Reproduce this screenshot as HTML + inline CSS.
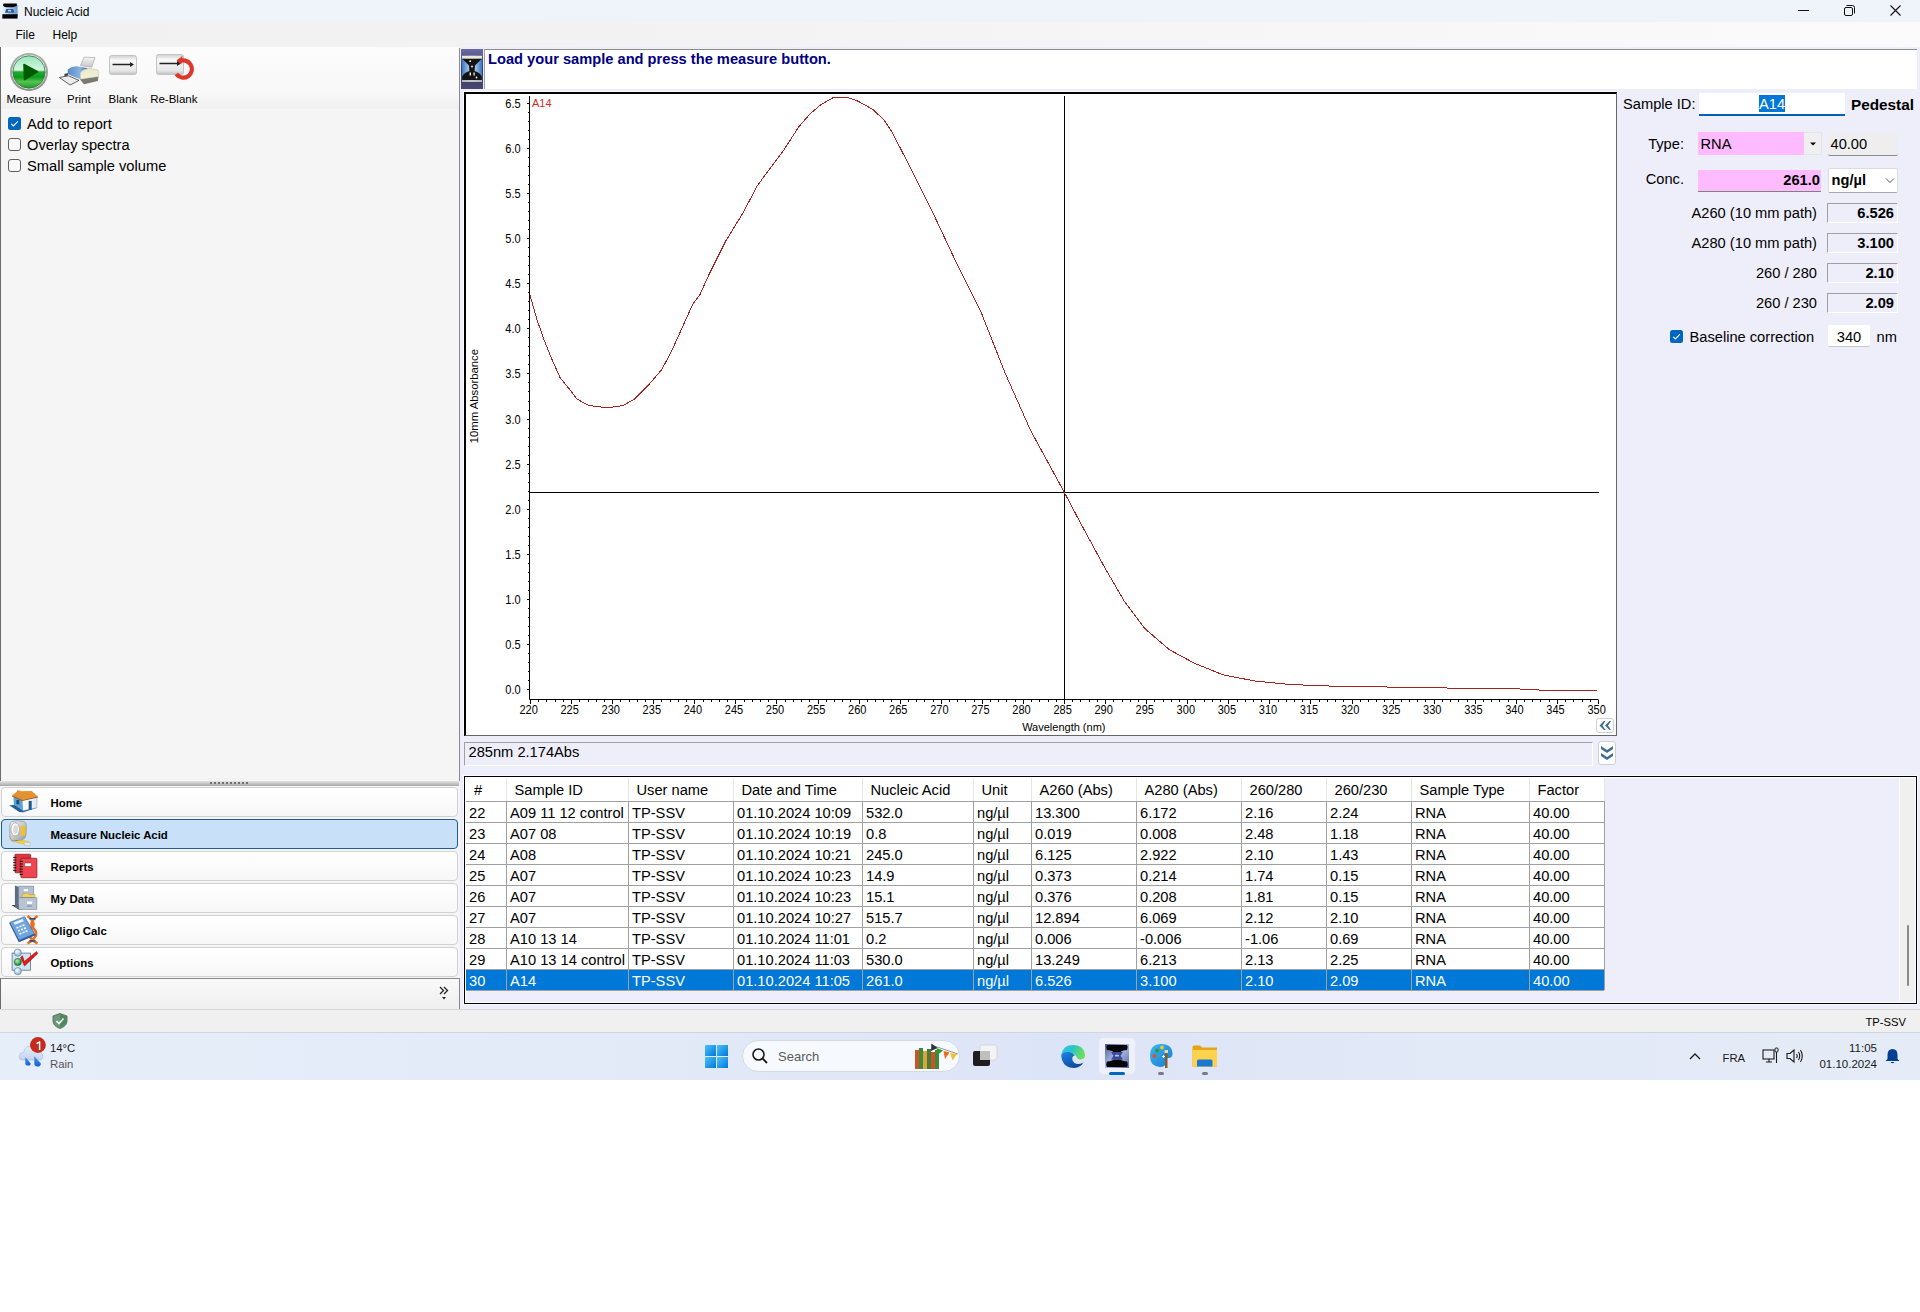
<!DOCTYPE html>
<html><head><meta charset="utf-8"><title>Nucleic Acid</title>
<style>
html,body{margin:0;padding:0;}
body{position:relative;width:1920px;height:1312px;overflow:hidden;background:#fff;font-family:"Liberation Sans", sans-serif;}
.t{position:absolute;line-height:1;white-space:nowrap;}
svg text{font-family:"Liberation Sans", sans-serif;}
</style></head><body>
<div style="position:absolute;left:0px;top:0px;width:1920px;height:22px;background:linear-gradient(#EFF3FA 0%,#EFF3FA 85%,#F0F2F6 100%);"></div>
<svg style="position:absolute;left:2px;top:3px" width="16" height="16" viewBox="0 0 16 16">
<defs><linearGradient id="gai" x1="0" y1="0" x2="1" y2="0"><stop offset="0" stop-color="#e8f2fc"/><stop offset="0.5" stop-color="#a8c8ec"/><stop offset="1" stop-color="#6a9ad0"/></linearGradient></defs>
<rect x="0.6" y="2" width="15" height="11" fill="url(#gai)"/>
<path d="M1.6 0.4 L14.8 0.4 L14.8 3 Q12 4 11 4.2 L4 4.2 Q2.5 4 0.9 2.5 Z" fill="#050505"/>
<path d="M0.3 11.2 L15.6 11.2 L15.6 15.6 L0.3 15.6 Z" fill="#050505"/>
<path d="M4.2 6 L11.2 6 L12.4 9.8 L3 9.8 Z" fill="#2a5a9a"/>
<ellipse cx="7.6" cy="7.7" rx="1.8" ry="0.9" fill="#c0dcf8"/>
</svg>
<div class="t" style="left:24px;top:6.29px;font-size:12px;color:#000;">Nucleic Acid</div>
<div style="position:absolute;left:1798px;top:10px;width:11px;height:1px;background:#111;"></div>
<svg style="position:absolute;left:1843px;top:4px" width="13" height="13" viewBox="0 0 13 13">
<rect x="1.5" y="3.5" width="8" height="8" rx="1.5" fill="none" stroke="#111" stroke-width="1"/>
<path d="M3.5 1.5 H9.5 a2 2 0 0 1 2 2 V9.5" fill="none" stroke="#111" stroke-width="1"/>
</svg>
<svg style="position:absolute;left:1889px;top:4px" width="13" height="13" viewBox="0 0 13 13">
<path d="M1.5 1.5 L11.5 11.5 M11.5 1.5 L1.5 11.5" stroke="#111" stroke-width="1.1"/>
</svg>
<div style="position:absolute;left:0px;top:22px;width:1920px;height:25px;background:linear-gradient(to right,#F1F1F1,#F3F3F3 40%,#FBFBFB);"></div>
<div class="t" style="left:15.5px;top:29.29px;font-size:12px;color:#000;">File</div>
<div class="t" style="left:52.5px;top:29.29px;font-size:12px;color:#000;">Help</div>
<div style="position:absolute;left:0px;top:47px;width:460px;height:962px;background:#F5F5F5;"></div>
<div style="position:absolute;left:0px;top:47px;width:459px;height:62px;background:linear-gradient(#FCFCFC 0%,#F8F8F8 75%,#EFEFEF 100%);"></div>
<div style="position:absolute;left:0px;top:47px;width:1px;height:734px;background:#6b6b6b;"></div>
<div style="position:absolute;left:459px;top:48px;width:1px;height:733px;background:#8a8a8a;"></div>
<svg style="position:absolute;left:8px;top:51px" width="42" height="42" viewBox="0 0 42 42">
<defs>
<radialGradient id="gring" cx="50%" cy="40%" r="60%"><stop offset="0" stop-color="#e8e8e8"/><stop offset="1" stop-color="#8c8c8c"/></radialGradient>
<linearGradient id="ggreen" x1="0" y1="0" x2="0" y2="1"><stop offset="0" stop-color="#98e6b8"/><stop offset="0.44" stop-color="#d4f6e2"/><stop offset="0.5" stop-color="#22a832"/><stop offset="0.66" stop-color="#0c9a1c"/><stop offset="0.8" stop-color="#58c450"/><stop offset="1" stop-color="#1e9a2a"/></linearGradient>
</defs>
<circle cx="21" cy="21" r="19" fill="url(#gring)"/>
<circle cx="21" cy="21" r="17" fill="#f4f8f4"/>
<circle cx="21" cy="21" r="16.2" fill="url(#ggreen)" stroke="#2a7a3a" stroke-width="0.8"/>
<path d="M16 13.5 L29.5 20.8 L16.5 28.5 Z" fill="#005a00" stroke="#005a00" stroke-width="1.6" stroke-linejoin="round"/>
</svg>
<svg style="position:absolute;left:58px;top:56px" width="44" height="32" viewBox="0 0 44 32">
<defs><linearGradient id="gpap" x1="0" y1="0" x2="0" y2="1"><stop offset="0" stop-color="#f4f4f4"/><stop offset="1" stop-color="#c8c8c8"/></linearGradient>
<linearGradient id="gblue" x1="0" y1="0" x2="1" y2="0"><stop offset="0" stop-color="#5a88c0"/><stop offset="0.6" stop-color="#8ab4e4"/><stop offset="1" stop-color="#3a5a88"/></linearGradient>
<linearGradient id="gcream" x1="0" y1="0" x2="0" y2="1"><stop offset="0" stop-color="#e8e8c8"/><stop offset="1" stop-color="#f2f2dc"/></linearGradient></defs>
<path d="M26 1.2 L37 1.5 L33.8 11.1 L22.5 9.6 Z" fill="url(#gpap)" stroke="#9a9a9a" stroke-width="0.6"/>
<path d="M6.3 18 L10 17 L10 19.5 L6.5 20.5 Z" fill="#444"/>
<path d="M21.6 23 L40.5 20.3 L39.9 25 L26 28.2 Z" fill="#7a7a70"/>
<path d="M9.7 13.4 Q14 10 18.7 10.2 L30.6 12.2 Q24 14 22.5 16.9 L22.5 23.2 Q16 21 9.7 18 Z" fill="url(#gblue)"/>
<path d="M30.6 12.2 L39.9 14 Q41 16 40.5 20.6 L22.5 23.2 L22.5 16.9 Q24 14 30.6 12.2 Z" fill="url(#gcream)" stroke="#b8b89a" stroke-width="0.5"/>
<path d="M1.3 21.5 L10.6 19.8 L21 24.4 L12.1 29 Z" fill="#ececec" stroke="#505050" stroke-width="0.9"/>
</svg>
<svg style="position:absolute;left:108px;top:54px" width="30" height="23" viewBox="0 0 30 23">
<defs><linearGradient id="gblank" x1="0" y1="0" x2="0" y2="1"><stop offset="0" stop-color="#cfcfcf"/><stop offset="0.25" stop-color="#f9f9f9"/><stop offset="0.8" stop-color="#e6e6e6"/><stop offset="1" stop-color="#bdbdbd"/></linearGradient></defs>
<rect x="1.5" y="1.5" width="27" height="19" rx="2" fill="url(#gblank)" stroke="#c4c4c4" stroke-width="1"/>
<path d="M4.5 10.5 H23" stroke="#222" stroke-width="1.5"/>
<path d="M22 8 L26 10.5 L22 13 Z" fill="#222"/>
</svg>
<svg style="position:absolute;left:155px;top:53px" width="42" height="30" viewBox="0 0 42 30">
<defs><linearGradient id="gblank2" x1="0" y1="0" x2="0" y2="1"><stop offset="0" stop-color="#cfcfcf"/><stop offset="0.25" stop-color="#f9f9f9"/><stop offset="0.8" stop-color="#e6e6e6"/><stop offset="1" stop-color="#bdbdbd"/></linearGradient></defs>
<rect x="1.5" y="1.5" width="27" height="20" rx="2" fill="url(#gblank2)" stroke="#c4c4c4" stroke-width="1"/>
<path d="M4.5 10.5 H23" stroke="#222" stroke-width="1.5"/>
<path d="M22 8 L26 10.5 L22 13 Z" fill="#222"/>
<path d="M23.7 8.8 A8.6 8.6 0 1 1 21.3 21" fill="none" stroke="#e0352b" stroke-width="4.2"/>
<path d="M21.6 7.6 L27.6 2.8 L26.4 11.6 Z" fill="#e0352b"/>
</svg>
<div class="t" style="left:-371.2px;width:800px;text-align:center;top:93.71px;font-size:11.5px;color:#000;">Measure</div>
<div class="t" style="left:-321.2px;width:800px;text-align:center;top:93.71px;font-size:11.5px;color:#000;">Print</div>
<div class="t" style="left:-277px;width:800px;text-align:center;top:93.71px;font-size:11.5px;color:#000;">Blank</div>
<div class="t" style="left:-226.2px;width:800px;text-align:center;top:93.71px;font-size:11.5px;color:#000;">Re-Blank</div>
<svg style="position:absolute;left:8px;top:117px" width="13" height="13" viewBox="0 0 13 13">
<rect x="0" y="0" width="13" height="13" rx="2.5" fill="#0067C0"/>
<path d="M3.2 6.8 L5.4 9 L9.8 4.4" fill="none" stroke="#fff" stroke-width="1.1"/></svg>
<svg style="position:absolute;left:8px;top:138px" width="13" height="13" viewBox="0 0 13 13">
<rect x="0.5" y="0.5" width="12" height="12" rx="2.5" fill="#F8F8F8" stroke="#5e5e5e" stroke-width="1"/></svg>
<svg style="position:absolute;left:8px;top:159px" width="13" height="13" viewBox="0 0 13 13">
<rect x="0.5" y="0.5" width="12" height="12" rx="2.5" fill="#F8F8F8" stroke="#5e5e5e" stroke-width="1"/></svg>
<div class="t" style="left:27px;top:117.03px;font-size:14.67px;color:#000;">Add to report</div>
<div class="t" style="left:27px;top:138.03px;font-size:14.67px;color:#000;">Overlay spectra</div>
<div class="t" style="left:27px;top:159.03px;font-size:14.67px;color:#000;">Small sample volume</div>
<div style="position:absolute;left:0px;top:781px;width:459px;height:5px;background:linear-gradient(#e4e4e4,#a8a8a8);"></div>
<div style="position:absolute;left:210px;top:782px;width:40px;height:2px;background:repeating-linear-gradient(to right,#707070 0 2px,transparent 2px 4px);"></div>
<div style="position:absolute;left:1px;top:787px;width:457px;height:30px;box-sizing:border-box;border:1px solid #d2d2d2;border-radius:4px;background:linear-gradient(#ffffff,#f7f7f7);"></div>
<div class="t" style="left:50.5px;top:797.80px;font-size:11.4px;font-weight:bold;color:#000;">Home</div>
<div style="position:absolute;left:1px;top:819px;width:457px;height:30px;box-sizing:border-box;border:1px solid #1f5b97;border-radius:4px;background:#C9E1F8;"></div>
<div class="t" style="left:50.5px;top:829.80px;font-size:11.4px;font-weight:bold;color:#000;">Measure Nucleic Acid</div>
<div style="position:absolute;left:1px;top:851px;width:457px;height:30px;box-sizing:border-box;border:1px solid #d2d2d2;border-radius:4px;background:linear-gradient(#ffffff,#f7f7f7);"></div>
<div class="t" style="left:50.5px;top:861.80px;font-size:11.4px;font-weight:bold;color:#000;">Reports</div>
<div style="position:absolute;left:1px;top:883px;width:457px;height:30px;box-sizing:border-box;border:1px solid #d2d2d2;border-radius:4px;background:linear-gradient(#ffffff,#f7f7f7);"></div>
<div class="t" style="left:50.5px;top:893.80px;font-size:11.4px;font-weight:bold;color:#000;">My Data</div>
<div style="position:absolute;left:1px;top:915px;width:457px;height:30px;box-sizing:border-box;border:1px solid #d2d2d2;border-radius:4px;background:linear-gradient(#ffffff,#f7f7f7);"></div>
<div class="t" style="left:50.5px;top:925.80px;font-size:11.4px;font-weight:bold;color:#000;">Oligo Calc</div>
<div style="position:absolute;left:1px;top:947px;width:457px;height:30px;box-sizing:border-box;border:1px solid #d2d2d2;border-radius:4px;background:linear-gradient(#ffffff,#f7f7f7);"></div>
<div class="t" style="left:50.5px;top:957.80px;font-size:11.4px;font-weight:bold;color:#000;">Options</div>
<svg style="position:absolute;left:0px;top:785px" width="50" height="195" viewBox="0 785 50 195">
<defs>
<linearGradient id="gwall" x1="0" y1="0" x2="1" y2="0"><stop offset="0" stop-color="#ffffff"/><stop offset="1" stop-color="#dfe9f2"/></linearGradient>
<linearGradient id="gcase" x1="0" y1="0" x2="1" y2="1"><stop offset="0" stop-color="#f8f8f8"/><stop offset="1" stop-color="#9a9a9a"/></linearGradient>
<radialGradient id="gball" cx="40%" cy="35%" r="60%"><stop offset="0" stop-color="#ffffff"/><stop offset="1" stop-color="#8fb8d8"/></radialGradient>
<radialGradient id="gballg" cx="40%" cy="35%" r="60%"><stop offset="0" stop-color="#b8f0b8"/><stop offset="1" stop-color="#1a8a2a"/></radialGradient>
</defs>
<!-- house -->
<path d="M9.2 805.3 L19.3 812 L23.3 812.3 L36.9 807.8 L22 804.8 Z" fill="#1f5f8f"/>
<path d="M13.4 796.4 L17.3 793.7 L22.3 799.4 L22.8 810.8 L13.9 804.8 Z" fill="#5aa3d6"/>
<rect x="16.4" y="799.9" width="2.9" height="4.4" fill="#1d4e7a"/>
<path d="M22.3 799.4 L36.9 796.9 L36.9 807.8 L22.8 810.8 Z" fill="url(#gwall)" stroke="#6a9cc6" stroke-width="0.5"/>
<rect x="28.7" y="800.9" width="3" height="8.9" fill="#1d5a8a"/>
<rect x="17.1" y="790.5" width="3.2" height="2.5" fill="#c87a28"/>
<path d="M12.1 795.4 L17.3 791.2 L31.7 791 L37.9 796.4 L22.3 799.9 Z" fill="#e3922f"/>
<path d="M12.1 795.4 L22.3 799.9 L37.9 796.4 L37.9 797.5 L22.3 801 L12.1 796.5 Z" fill="#9a5a18"/>
<!-- tape measure -->
<path d="M11.8 837.5 L29.7 842 L29.2 845.5 L11 841 Z" fill="#f0d040" stroke="#c8a830" stroke-width="0.4"/>
<path d="M24.2 842 L29.9 842.6 L30.2 846 L24.5 845.5 Z" fill="#e8e8e8" stroke="#b0b0b0" stroke-width="0.5"/>
<path d="M9.6 836 Q10 841 15 841 L18 840.5 L17 837 Z" fill="#111"/>
<path d="M12 821.5 Q17 820.5 23 821.2 Q26.5 822 26.3 826 L26 835 Q25.5 839 21.5 840 L13 841 Q9.6 840 9.7 835 L9.7 826 Q10 822 12 821.5 Z" fill="url(#gcase)" stroke="#8a8a8a" stroke-width="0.6"/>
<ellipse cx="15.2" cy="829.4" rx="4.3" ry="6.6" fill="#fafafa" stroke="#a0a0a0" stroke-width="0.8"/>
<ellipse cx="15.6" cy="829.6" rx="2.4" ry="4.4" fill="#d8d8d8"/>
<rect x="20.8" y="826" width="4.6" height="9.5" fill="#f0c030"/>
<!-- reports -->
<rect x="14.9" y="854.2" width="15.8" height="18.6" rx="1" fill="#e23440" stroke="#7a1a20" stroke-width="0.7"/>
<rect x="20.8" y="858.2" width="16.1" height="19.5" rx="1" fill="#f04450" stroke="#7a1a20" stroke-width="0.7"/>
<rect x="24.5" y="862.9" width="7" height="3.5" rx="0.8" fill="#fff" stroke="#9a2028" stroke-width="0.5"/>
<path d="M13.1 857.4 h3.3 M13.1 860 h3.3 M13.1 862.6 h3.3 M13.1 865.2 h3.3 M13.1 867.8 h3.3 M13.1 870.4 h3.3 M19.6 861.4 h3.3 M19.6 864 h3.3 M19.6 866.6 h3.3 M19.6 869.2 h3.3 M19.6 871.8 h3.3 M19.6 874.4 h3.3" stroke="#1a1a1a" stroke-width="1"/>
<!-- my data -->
<path d="M11.4 905 L18.8 909.5 L22 909.5 L18 905 Z" fill="#333"/>
<path d="M14.9 885.5 L18.8 886.7 L18.8 909.5 L14.9 907 Z" fill="#5c6c84"/>
<path d="M14.9 885.5 L33 885.2 L34 886.7 L18.8 886.7 Z" fill="#d8e0ea"/>
<rect x="18.8" y="886.7" width="15" height="11" fill="#b4c0d0" stroke="#6a788c" stroke-width="0.5"/>
<rect x="23.8" y="889.2" width="4.2" height="2" fill="#fff"/>
<path d="M21.8 897.5 L23 893.5 L28 893.1 L29 894.5 L35.2 894.8 L35 897.6 Z" fill="#f4d35a" stroke="#a08a20" stroke-width="0.4"/>
<rect x="18.8" y="897.8" width="18.1" height="11.7" fill="#b8c4d4" stroke="#6a788c" stroke-width="0.5"/>
<rect x="27" y="901.5" width="5.2" height="2.4" fill="#fff"/>
<rect x="27" y="905.5" width="5.2" height="1" fill="#7a8898"/>
<!-- oligo calc -->
<path d="M27.5 916 C33 920 36 924 31 929 C26 934 30 939 37.5 943.5" fill="none" stroke="#ea7024" stroke-width="2.6"/>
<path d="M37.5 916 C32 920 29 924 34 929 C39 934 35 939 27.5 943.5" fill="none" stroke="#ea7024" stroke-width="2.6"/>
<path d="M29.5 918.8 h6 M29.5 941 h6" stroke="#1d4e8a" stroke-width="1.4"/>
<path d="M9.2 923.1 L24.8 917 L35.7 935.3 L18.8 942.2 Z" fill="#2c5a9a"/>
<path d="M9.8 922.3 L24.5 916.6 L34.5 933.8 L19 940.2 Z" fill="#6fa4dc" stroke="#3a6aa8" stroke-width="0.5"/>
<path d="M13.5 922.5 L22.5 919 L23.8 921.2 L14.8 924.8 Z" fill="#eef5fc"/>
<path d="M16.5 928 l2 -0.8 M19.5 926.8 l2 -0.8 M22.5 925.6 l2 -0.8 M18 931 l2 -0.8 M21 929.8 l2 -0.8 M24 928.6 l2 -0.8 M19.5 934 l2 -0.8 M22.5 932.8 l2 -0.8 M25.5 931.6 l2 -0.8" stroke="#f4f8fc" stroke-width="1.7"/>
<!-- options -->
<rect x="12.1" y="953.1" width="18.4" height="17.1" fill="#cfe3f3" stroke="#5c7088" stroke-width="0.8"/>
<circle cx="17.8" cy="952.6" r="3.6" fill="url(#gball)" stroke="#5c7c98" stroke-width="0.6"/>
<circle cx="17.8" cy="962" r="3.6" fill="url(#gballg)" stroke="#1a5a2a" stroke-width="0.6"/>
<circle cx="17.8" cy="971.2" r="3.6" fill="url(#gball)" stroke="#5c7c98" stroke-width="0.6"/>
<path d="M20.5 957.5 L22.5 955.8 L24.3 961.5 L36.5 951.5 L37.8 953.5 L24.5 966 Z" fill="#e81818" stroke="#8a0a0a" stroke-width="0.5"/>
</svg>
<div style="position:absolute;left:0px;top:978px;width:460px;height:32px;box-sizing:border-box;border-top:1px solid #8a8a8a;border-left:1px solid #6b6b6b;border-right:1px solid #8a8a8a;border-bottom:1px solid #7a7a7a;background:linear-gradient(#f9f9f9,#efefef);"></div>
<svg style="position:absolute;left:438px;top:985px" width="12" height="16" viewBox="0 0 12 16">
<path d="M2 2 L5.5 5.5 L2 9 M6 2 L9.5 5.5 L6 9" fill="none" stroke="#222" stroke-width="1.3"/>
<path d="M4 12 L8 12 L6 14.5 Z" fill="#222"/>
</svg>
<div style="position:absolute;left:460px;top:47px;width:1460px;height:962px;background:#EEEEFA;"></div>
<svg style="position:absolute;left:461px;top:49px" width="22" height="40" viewBox="0 0 22 40">
<defs><linearGradient id="gmsg" x1="0" y1="0" x2="1" y2="0"><stop offset="0" stop-color="#3a78c0"/><stop offset="0.5" stop-color="#d2e8fb"/><stop offset="1" stop-color="#3a78c0"/></linearGradient>
<linearGradient id="gfr" x1="0" y1="0" x2="0" y2="1"><stop offset="0" stop-color="#6c6aa6"/><stop offset="0.5" stop-color="#3a3858"/><stop offset="1" stop-color="#4a4872"/></linearGradient></defs>
<rect x="0" y="0" width="22" height="40" fill="url(#gfr)"/>
<rect x="1" y="6.8" width="20" height="26" fill="url(#gmsg)"/>
<rect x="1" y="6.8" width="20" height="2.9" fill="#ece8d8"/>
<path d="M1.2 9.7 L20.8 9.7 L14 16.6 L13.6 22 Q19 23.5 20.8 27.5 L20.8 31.2 L1.2 31.2 L1.2 27.5 Q3 23.5 8.4 22 L8 16.6 Z" fill="#141414"/>
<rect x="1" y="31.2" width="20" height="1.6" fill="#c8c8cc"/>
<circle cx="9.2" cy="12.2" r="0.9" fill="#fff"/><circle cx="11" cy="17.5" r="1" fill="#e8e8e8"/>
<rect x="8.6" y="23.5" width="1.4" height="3" fill="#f0f0f0"/><rect x="12.4" y="23.5" width="1.4" height="3" fill="#e0e0e0"/>
<circle cx="15.5" cy="28.5" r="0.9" fill="#fff"/>
</svg>
<div style="position:absolute;left:484px;top:49px;width:1433px;height:40px;box-sizing:border-box;border-top:1px solid #8c8c8c;border-left:1px solid #a0a0a0;background:#fff;"></div>
<div class="t" style="left:488px;top:52.03px;font-size:14.67px;font-weight:bold;color:#000080;">Load your sample and press the measure button.</div>
<div style="position:absolute;left:464px;top:92px;width:1153px;height:644px;box-sizing:border-box;border-top:2px solid #000;border-left:2px solid #000;border-right:1px solid #666;border-bottom:1px solid #666;background:#fff;box-shadow:-1px -1px 0 #fcfcff;"></div>
<svg style="position:absolute;left:0;top:0" width="1920" height="1312" viewBox="0 0 1920 1312">
<path d="M529.5 96 V699.5 H1598.5" fill="none" stroke="#000" stroke-width="1"/>
<path d="M527 689.5 H529 M528 680.5 H529 M528 671.5 H529 M528 662.5 H529 M528 653.5 H529 M527 644.5 H529 M528 635.5 H529 M528 626.5 H529 M528 617.5 H529 M528 608.5 H529 M527 599.5 H529 M528 590.5 H529 M528 581.5 H529 M528 572.5 H529 M528 563.5 H529 M527 554.5 H529 M528 545.5 H529 M528 536.5 H529 M528 527.5 H529 M528 518.5 H529 M527 509.5 H529 M528 500.5 H529 M528 491.5 H529 M528 482.5 H529 M528 473.5 H529 M527 464.5 H529 M528 455.5 H529 M528 446.5 H529 M528 437.5 H529 M528 428.5 H529 M527 419.5 H529 M528 410.5 H529 M528 401.5 H529 M528 391.5 H529 M528 382.5 H529 M527 373.5 H529 M528 364.5 H529 M528 355.5 H529 M528 346.5 H529 M528 337.5 H529 M527 328.5 H529 M528 319.5 H529 M528 310.5 H529 M528 301.5 H529 M528 292.5 H529 M527 283.5 H529 M528 274.5 H529 M528 265.5 H529 M528 256.5 H529 M528 247.5 H529 M527 238.5 H529 M528 229.5 H529 M528 220.5 H529 M528 211.5 H529 M528 202.5 H529 M527 193.5 H529 M528 184.5 H529 M528 175.5 H529 M528 166.5 H529 M528 157.5 H529 M527 148.5 H529 M528 139.5 H529 M528 130.5 H529 M528 121.5 H529 M528 112.5 H529 M527 103.5 H529 M530.5 700 V704 M538.5 700 V702 M546.5 700 V702 M555.5 700 V702 M563.5 700 V702 M571.5 700 V704 M579.5 700 V702 M588.5 700 V702 M596.5 700 V702 M604.5 700 V702 M612.5 700 V704 M620.5 700 V702 M629.5 700 V702 M637.5 700 V702 M645.5 700 V702 M653.5 700 V704 M661.5 700 V702 M670.5 700 V702 M678.5 700 V702 M686.5 700 V702 M694.5 700 V704 M703.5 700 V702 M711.5 700 V702 M719.5 700 V702 M727.5 700 V702 M735.5 700 V704 M744.5 700 V702 M752.5 700 V702 M760.5 700 V702 M768.5 700 V702 M776.5 700 V704 M785.5 700 V702 M793.5 700 V702 M801.5 700 V702 M809.5 700 V702 M818.5 700 V704 M826.5 700 V702 M834.5 700 V702 M842.5 700 V702 M850.5 700 V702 M859.5 700 V704 M867.5 700 V702 M875.5 700 V702 M883.5 700 V702 M891.5 700 V702 M900.5 700 V704 M908.5 700 V702 M916.5 700 V702 M924.5 700 V702 M933.5 700 V702 M941.5 700 V704 M949.5 700 V702 M957.5 700 V702 M965.5 700 V702 M974.5 700 V702 M982.5 700 V704 M990.5 700 V702 M998.5 700 V702 M1006.5 700 V702 M1015.5 700 V702 M1023.5 700 V704 M1031.5 700 V702 M1039.5 700 V702 M1048.5 700 V702 M1056.5 700 V702 M1064.5 700 V704 M1072.5 700 V702 M1080.5 700 V702 M1089.5 700 V702 M1097.5 700 V702 M1105.5 700 V704 M1113.5 700 V702 M1122.5 700 V702 M1130.5 700 V702 M1138.5 700 V702 M1146.5 700 V704 M1154.5 700 V702 M1163.5 700 V702 M1171.5 700 V702 M1179.5 700 V702 M1187.5 700 V704 M1195.5 700 V702 M1204.5 700 V702 M1212.5 700 V702 M1220.5 700 V702 M1228.5 700 V704 M1237.5 700 V702 M1245.5 700 V702 M1253.5 700 V702 M1261.5 700 V702 M1269.5 700 V704 M1278.5 700 V702 M1286.5 700 V702 M1294.5 700 V702 M1302.5 700 V702 M1310.5 700 V704 M1319.5 700 V702 M1327.5 700 V702 M1335.5 700 V702 M1343.5 700 V702 M1352.5 700 V704 M1360.5 700 V702 M1368.5 700 V702 M1376.5 700 V702 M1384.5 700 V702 M1393.5 700 V704 M1401.5 700 V702 M1409.5 700 V702 M1417.5 700 V702 M1425.5 700 V702 M1434.5 700 V704 M1442.5 700 V702 M1450.5 700 V702 M1458.5 700 V702 M1467.5 700 V702 M1475.5 700 V704 M1483.5 700 V702 M1491.5 700 V702 M1499.5 700 V702 M1508.5 700 V702 M1516.5 700 V704 M1524.5 700 V702 M1532.5 700 V702 M1540.5 700 V702 M1549.5 700 V702 M1557.5 700 V704 M1565.5 700 V702 M1573.5 700 V702 M1582.5 700 V702 M1590.5 700 V702 M1598.5 700 V704" stroke="#000" stroke-width="1"/>
<path d="M1064.5 96 V700 M529 492.5 H1599" stroke="#000" stroke-width="1"/>
<path d="M530.0 295.0 L537.2 320.3 L544.0 339.8 L550.9 356.9 L560.0 377.5 L569.2 388.9 L577.2 399.2 L588.6 405.5 L602.3 407.2 L611.5 407.2 L623.0 405.5 L634.4 399.2 L648.1 385.5 L661.8 369.5 L671.0 352.3 L682.4 327.2 L692.7 304.3 L700.0 294.5 L709.2 274.0 L725.2 242.0 L742.8 213.2 L757.2 186.0 L765.2 174.8 L782.8 151.6 L798.8 126.8 L810.0 114.0 L821.2 104.4 L834.0 97.2 L846.8 97.2 L858.0 101.2 L872.5 109.2 L883.7 119.6 L891.7 131.6 L900.0 147.6 L912.4 171.6 L931.6 210.0 L957.2 264.4 L981.2 312.5 L1005.2 373.3 L1030.8 430.9 L1064.5 492.7 L1081.2 524.3 L1104.3 566.8 L1123.8 600.4 L1145.0 628.7 L1169.8 650.0 L1194.6 663.3 L1222.9 674.8 L1254.8 681.0 L1290.2 684.5 L1336.3 686.3 L1400.0 687.2 L1429.0 687.8 L1516.0 688.8 L1542.0 690.2 L1597.0 690.4" fill="none" stroke="#A82222" stroke-width="1" shape-rendering="crispEdges"/>
<g transform="scale(0.92 1)">
<text x="565.87" y="693.8" text-anchor="end" font-size="12" fill="#000">0.0</text>
<text x="565.87" y="648.8" text-anchor="end" font-size="12" fill="#000">0.5</text>
<text x="565.87" y="603.8" text-anchor="end" font-size="12" fill="#000">1.0</text>
<text x="565.87" y="558.8" text-anchor="end" font-size="12" fill="#000">1.5</text>
<text x="565.87" y="513.8" text-anchor="end" font-size="12" fill="#000">2.0</text>
<text x="565.87" y="468.8" text-anchor="end" font-size="12" fill="#000">2.5</text>
<text x="565.87" y="423.8" text-anchor="end" font-size="12" fill="#000">3.0</text>
<text x="565.87" y="377.8" text-anchor="end" font-size="12" fill="#000">3.5</text>
<text x="565.87" y="332.8" text-anchor="end" font-size="12" fill="#000">4.0</text>
<text x="565.87" y="287.8" text-anchor="end" font-size="12" fill="#000">4.5</text>
<text x="565.87" y="242.8" text-anchor="end" font-size="12" fill="#000">5.0</text>
<text x="565.87" y="197.8" text-anchor="end" font-size="12" fill="#000">5.5</text>
<text x="565.87" y="152.8" text-anchor="end" font-size="12" fill="#000">6.0</text>
<text x="565.87" y="107.8" text-anchor="end" font-size="12" fill="#000">6.5</text>
<text x="574.57" y="714" text-anchor="middle" font-size="12" fill="#000">220</text>
<text x="619.21" y="714" text-anchor="middle" font-size="12" fill="#000">225</text>
<text x="663.86" y="714" text-anchor="middle" font-size="12" fill="#000">230</text>
<text x="708.51" y="714" text-anchor="middle" font-size="12" fill="#000">235</text>
<text x="753.16" y="714" text-anchor="middle" font-size="12" fill="#000">240</text>
<text x="797.81" y="714" text-anchor="middle" font-size="12" fill="#000">245</text>
<text x="842.46" y="714" text-anchor="middle" font-size="12" fill="#000">250</text>
<text x="887.11" y="714" text-anchor="middle" font-size="12" fill="#000">255</text>
<text x="931.76" y="714" text-anchor="middle" font-size="12" fill="#000">260</text>
<text x="976.40" y="714" text-anchor="middle" font-size="12" fill="#000">265</text>
<text x="1021.05" y="714" text-anchor="middle" font-size="12" fill="#000">270</text>
<text x="1065.70" y="714" text-anchor="middle" font-size="12" fill="#000">275</text>
<text x="1110.35" y="714" text-anchor="middle" font-size="12" fill="#000">280</text>
<text x="1155.00" y="714" text-anchor="middle" font-size="12" fill="#000">285</text>
<text x="1199.65" y="714" text-anchor="middle" font-size="12" fill="#000">290</text>
<text x="1244.30" y="714" text-anchor="middle" font-size="12" fill="#000">295</text>
<text x="1288.95" y="714" text-anchor="middle" font-size="12" fill="#000">300</text>
<text x="1333.60" y="714" text-anchor="middle" font-size="12" fill="#000">305</text>
<text x="1378.24" y="714" text-anchor="middle" font-size="12" fill="#000">310</text>
<text x="1422.89" y="714" text-anchor="middle" font-size="12" fill="#000">315</text>
<text x="1467.54" y="714" text-anchor="middle" font-size="12" fill="#000">320</text>
<text x="1512.19" y="714" text-anchor="middle" font-size="12" fill="#000">325</text>
<text x="1556.84" y="714" text-anchor="middle" font-size="12" fill="#000">330</text>
<text x="1601.49" y="714" text-anchor="middle" font-size="12" fill="#000">335</text>
<text x="1646.14" y="714" text-anchor="middle" font-size="12" fill="#000">340</text>
<text x="1690.79" y="714" text-anchor="middle" font-size="12" fill="#000">345</text>
<text x="1735.43" y="714" text-anchor="middle" font-size="12" fill="#000">350</text>
</g>
<text x="1063.8" y="730.6" text-anchor="middle" font-size="11" fill="#000">Wavelength (nm)</text>
<text transform="translate(478.3 396.1) rotate(-90)" text-anchor="middle" font-size="11.3" fill="#000">10mm Absorbance</text>
<text x="532" y="106.5" font-size="11" fill="#D42A2A">A14</text>
</svg>
<div style="position:absolute;left:1596px;top:718px;width:18px;height:15px;box-sizing:border-box;border:1px solid #d0d0d0;border-radius:3px;background:#fff;"></div>
<svg style="position:absolute;left:1596px;top:718px" width="18" height="15" viewBox="0 0 18 15">
<path d="M8 3 L3.5 7.5 L8 12 L9.5 12 L6.5 7.5 L9.5 3 Z M13.5 3 L9 7.5 L13.5 12 L15 12 L12 7.5 L15 3 Z" fill="#3d6e8e"/>
</svg>
<div style="position:absolute;left:464px;top:742px;width:1129px;height:24px;box-sizing:border-box;border-top:1px solid #a0a0a0;border-left:1px solid #a0a0a0;border-bottom:1px solid #fff;border-right:1px solid #fff;"></div>
<div class="t" style="left:468.5px;top:745.03px;font-size:14.67px;color:#000;">285nm 2.174Abs</div>
<div style="position:absolute;left:1598px;top:741px;width:18px;height:24px;box-sizing:border-box;border:1px solid #d0d0d0;border-radius:3px;background:#fff;"></div>
<svg style="position:absolute;left:1598px;top:741px" width="18" height="24" viewBox="0 0 18 24">
<path d="M3 5 L9 9 L15 5 L15 8 L9 12 L3 8 Z M3 12 L9 16 L15 12 L15 15 L9 19 L3 15 Z" fill="#3d6e8e"/>
</svg>
<div class="t" style="left:1623px;top:97.03px;font-size:14.67px;color:#000;">Sample ID:</div>
<div style="position:absolute;left:1699px;top:93px;width:146px;height:23px;box-sizing:border-box;background:#fff;border-bottom:2px solid #005FB8;"></div>
<div style="position:absolute;left:1759px;top:95px;width:25.5px;height:17px;background:#0078D7;"></div>
<div class="t" style="left:1759px;top:97.03px;font-size:14.67px;color:#fff;">A14</div>
<div class="t" style="left:1851px;top:96.50px;font-size:15.3px;font-weight:bold;color:#000;">Pedestal</div>
<div class="t" style="right:236px;top:137.03px;font-size:14.67px;color:#000;">Type:</div>
<div style="position:absolute;left:1698px;top:132px;width:124px;height:23px;box-sizing:border-box;border:1px solid #e4e4e4;background:#F0F0F0;"></div>
<div style="position:absolute;left:1698px;top:132px;width:106px;height:23px;background:#FFBBFF;"></div>
<svg style="position:absolute;left:1809px;top:141px" width="8" height="6" viewBox="0 0 8 6"><path d="M1 1.5 H7 L4 4.5 Z" fill="#000"/></svg>
<div class="t" style="left:1700.5px;top:137.03px;font-size:14.67px;color:#000;">RNA</div>
<div style="position:absolute;left:1828px;top:133px;width:70px;height:23px;box-sizing:border-box;background:#EEEEEE;border-bottom:1px solid #8c8c8c;border-radius:2px;"></div>
<div class="t" style="left:1830.5px;top:137.03px;font-size:14.67px;color:#000;">40.00</div>
<div class="t" style="right:236px;top:172.03px;font-size:14.67px;color:#000;">Conc.</div>
<div style="position:absolute;left:1698px;top:170px;width:123px;height:22px;box-sizing:border-box;background:#FFBBFF;border-bottom:1px solid #808080;"></div>
<div class="t" style="right:100px;top:173.03px;font-size:14.67px;font-weight:bold;color:#000;">261.0</div>
<div style="position:absolute;left:1828px;top:168px;width:70px;height:25px;box-sizing:border-box;background:#fff;border:1px solid #dcdcdc;border-bottom:1px solid #a8a8a8;border-radius:2px;"></div>
<div class="t" style="left:1831.5px;top:173.03px;font-size:14.67px;font-weight:bold;color:#000;">ng/µl</div>
<svg style="position:absolute;left:1885px;top:177px" width="10" height="7" viewBox="0 0 10 7"><path d="M1 1.5 L5 5.5 L9 1.5" fill="none" stroke="#555" stroke-width="1"/></svg>
<div class="t" style="right:103px;top:206.03px;font-size:14.67px;color:#000;">A260 (10 mm path)</div>
<div style="position:absolute;left:1827px;top:203px;width:71px;height:20px;box-sizing:border-box;border-top:1px solid #a0a0a0;border-left:1px solid #a0a0a0;border-bottom:1px solid #fff;border-right:1px solid #fff;"></div>
<div class="t" style="right:26px;top:206.03px;font-size:14.67px;font-weight:bold;color:#000;">6.526</div>
<div class="t" style="right:103px;top:236.03px;font-size:14.67px;color:#000;">A280 (10 mm path)</div>
<div style="position:absolute;left:1827px;top:233px;width:71px;height:20px;box-sizing:border-box;border-top:1px solid #a0a0a0;border-left:1px solid #a0a0a0;border-bottom:1px solid #fff;border-right:1px solid #fff;"></div>
<div class="t" style="right:26px;top:236.03px;font-size:14.67px;font-weight:bold;color:#000;">3.100</div>
<div class="t" style="right:103px;top:266.03px;font-size:14.67px;color:#000;">260 / 280</div>
<div style="position:absolute;left:1827px;top:263px;width:71px;height:20px;box-sizing:border-box;border-top:1px solid #a0a0a0;border-left:1px solid #a0a0a0;border-bottom:1px solid #fff;border-right:1px solid #fff;"></div>
<div class="t" style="right:26px;top:266.03px;font-size:14.67px;font-weight:bold;color:#000;">2.10</div>
<div class="t" style="right:103px;top:296.03px;font-size:14.67px;color:#000;">260 / 230</div>
<div style="position:absolute;left:1827px;top:293px;width:71px;height:20px;box-sizing:border-box;border-top:1px solid #a0a0a0;border-left:1px solid #a0a0a0;border-bottom:1px solid #fff;border-right:1px solid #fff;"></div>
<div class="t" style="right:26px;top:296.03px;font-size:14.67px;font-weight:bold;color:#000;">2.09</div>
<svg style="position:absolute;left:1670px;top:330px" width="13" height="13" viewBox="0 0 13 13">
<rect x="0" y="0" width="13" height="13" rx="2.5" fill="#0067C0"/>
<path d="M3.2 6.8 L5.4 9 L9.8 4.4" fill="none" stroke="#fff" stroke-width="1.1"/></svg>
<div class="t" style="left:1689.5px;top:330.03px;font-size:14.67px;color:#000;">Baseline correction</div>
<div style="position:absolute;left:1828px;top:325px;width:42px;height:22px;box-sizing:border-box;background:#fff;border-bottom:1px solid #c8c8c8;border-radius:2px;"></div>
<div class="t" style="left:1449px;width:800px;text-align:center;top:330.03px;font-size:14.67px;color:#000;">340</div>
<div class="t" style="left:1876.5px;top:330.03px;font-size:14.67px;color:#000;">nm</div>
<div style="position:absolute;left:464px;top:776px;width:1453px;height:228px;box-sizing:border-box;border:1px solid #000;box-shadow:inset 0 0 0 1px #fff,0 0 0 1px #fafaff;"></div>
<div style="position:absolute;left:466px;top:778px;width:1138px;height:23px;background:#FFFFFF;"></div>
<div class="t" style="left:474px;top:783.03px;font-size:14.67px;color:#000;">#</div>
<div class="t" style="left:514.5px;top:783.03px;font-size:14.67px;color:#000;">Sample ID</div>
<div style="position:absolute;left:506px;top:778px;width:1px;height:23px;background:#E5E5E5;"></div>
<div class="t" style="left:636.5px;top:783.03px;font-size:14.67px;color:#000;">User name</div>
<div style="position:absolute;left:628px;top:778px;width:1px;height:23px;background:#E5E5E5;"></div>
<div class="t" style="left:741.5px;top:783.03px;font-size:14.67px;color:#000;">Date and Time</div>
<div style="position:absolute;left:733px;top:778px;width:1px;height:23px;background:#E5E5E5;"></div>
<div class="t" style="left:870.5px;top:783.03px;font-size:14.67px;color:#000;">Nucleic Acid</div>
<div style="position:absolute;left:862px;top:778px;width:1px;height:23px;background:#E5E5E5;"></div>
<div class="t" style="left:981.5px;top:783.03px;font-size:14.67px;color:#000;">Unit</div>
<div style="position:absolute;left:973px;top:778px;width:1px;height:23px;background:#E5E5E5;"></div>
<div class="t" style="left:1039.5px;top:783.03px;font-size:14.67px;color:#000;">A260 (Abs)</div>
<div style="position:absolute;left:1031px;top:778px;width:1px;height:23px;background:#E5E5E5;"></div>
<div class="t" style="left:1144.5px;top:783.03px;font-size:14.67px;color:#000;">A280 (Abs)</div>
<div style="position:absolute;left:1136px;top:778px;width:1px;height:23px;background:#E5E5E5;"></div>
<div class="t" style="left:1249.5px;top:783.03px;font-size:14.67px;color:#000;">260/280</div>
<div style="position:absolute;left:1241px;top:778px;width:1px;height:23px;background:#E5E5E5;"></div>
<div class="t" style="left:1334.5px;top:783.03px;font-size:14.67px;color:#000;">260/230</div>
<div style="position:absolute;left:1326px;top:778px;width:1px;height:23px;background:#E5E5E5;"></div>
<div class="t" style="left:1419.5px;top:783.03px;font-size:14.67px;color:#000;">Sample Type</div>
<div style="position:absolute;left:1411px;top:778px;width:1px;height:23px;background:#E5E5E5;"></div>
<div class="t" style="left:1537.5px;top:783.03px;font-size:14.67px;color:#000;">Factor</div>
<div style="position:absolute;left:1529px;top:778px;width:1px;height:23px;background:#E5E5E5;"></div>
<div style="position:absolute;left:466px;top:801px;width:1138px;height:21px;background:#fff;"></div>
<div class="t" style="left:469px;top:806.03px;font-size:14.67px;color:#000;">22</div>
<div class="t" style="left:510px;top:806.03px;font-size:14.67px;color:#000;">A09 11 12 control</div>
<div class="t" style="left:632px;top:806.03px;font-size:14.67px;color:#000;">TP-SSV</div>
<div class="t" style="left:737px;top:806.03px;font-size:14.67px;color:#000;">01.10.2024 10:09</div>
<div class="t" style="left:866px;top:806.03px;font-size:14.67px;color:#000;">532.0</div>
<div class="t" style="left:977px;top:806.03px;font-size:14.67px;color:#000;">ng/µl</div>
<div class="t" style="left:1035px;top:806.03px;font-size:14.67px;color:#000;">13.300</div>
<div class="t" style="left:1140px;top:806.03px;font-size:14.67px;color:#000;">6.172</div>
<div class="t" style="left:1245px;top:806.03px;font-size:14.67px;color:#000;">2.16</div>
<div class="t" style="left:1330px;top:806.03px;font-size:14.67px;color:#000;">2.24</div>
<div class="t" style="left:1415px;top:806.03px;font-size:14.67px;color:#000;">RNA</div>
<div class="t" style="left:1533px;top:806.03px;font-size:14.67px;color:#000;">40.00</div>
<div style="position:absolute;left:466px;top:822px;width:1138px;height:21px;background:#fff;"></div>
<div class="t" style="left:469px;top:827.03px;font-size:14.67px;color:#000;">23</div>
<div class="t" style="left:510px;top:827.03px;font-size:14.67px;color:#000;">A07 08</div>
<div class="t" style="left:632px;top:827.03px;font-size:14.67px;color:#000;">TP-SSV</div>
<div class="t" style="left:737px;top:827.03px;font-size:14.67px;color:#000;">01.10.2024 10:19</div>
<div class="t" style="left:866px;top:827.03px;font-size:14.67px;color:#000;">0.8</div>
<div class="t" style="left:977px;top:827.03px;font-size:14.67px;color:#000;">ng/µl</div>
<div class="t" style="left:1035px;top:827.03px;font-size:14.67px;color:#000;">0.019</div>
<div class="t" style="left:1140px;top:827.03px;font-size:14.67px;color:#000;">0.008</div>
<div class="t" style="left:1245px;top:827.03px;font-size:14.67px;color:#000;">2.48</div>
<div class="t" style="left:1330px;top:827.03px;font-size:14.67px;color:#000;">1.18</div>
<div class="t" style="left:1415px;top:827.03px;font-size:14.67px;color:#000;">RNA</div>
<div class="t" style="left:1533px;top:827.03px;font-size:14.67px;color:#000;">40.00</div>
<div style="position:absolute;left:466px;top:843px;width:1138px;height:21px;background:#fff;"></div>
<div class="t" style="left:469px;top:848.03px;font-size:14.67px;color:#000;">24</div>
<div class="t" style="left:510px;top:848.03px;font-size:14.67px;color:#000;">A08</div>
<div class="t" style="left:632px;top:848.03px;font-size:14.67px;color:#000;">TP-SSV</div>
<div class="t" style="left:737px;top:848.03px;font-size:14.67px;color:#000;">01.10.2024 10:21</div>
<div class="t" style="left:866px;top:848.03px;font-size:14.67px;color:#000;">245.0</div>
<div class="t" style="left:977px;top:848.03px;font-size:14.67px;color:#000;">ng/µl</div>
<div class="t" style="left:1035px;top:848.03px;font-size:14.67px;color:#000;">6.125</div>
<div class="t" style="left:1140px;top:848.03px;font-size:14.67px;color:#000;">2.922</div>
<div class="t" style="left:1245px;top:848.03px;font-size:14.67px;color:#000;">2.10</div>
<div class="t" style="left:1330px;top:848.03px;font-size:14.67px;color:#000;">1.43</div>
<div class="t" style="left:1415px;top:848.03px;font-size:14.67px;color:#000;">RNA</div>
<div class="t" style="left:1533px;top:848.03px;font-size:14.67px;color:#000;">40.00</div>
<div style="position:absolute;left:466px;top:864px;width:1138px;height:21px;background:#fff;"></div>
<div class="t" style="left:469px;top:869.03px;font-size:14.67px;color:#000;">25</div>
<div class="t" style="left:510px;top:869.03px;font-size:14.67px;color:#000;">A07</div>
<div class="t" style="left:632px;top:869.03px;font-size:14.67px;color:#000;">TP-SSV</div>
<div class="t" style="left:737px;top:869.03px;font-size:14.67px;color:#000;">01.10.2024 10:23</div>
<div class="t" style="left:866px;top:869.03px;font-size:14.67px;color:#000;">14.9</div>
<div class="t" style="left:977px;top:869.03px;font-size:14.67px;color:#000;">ng/µl</div>
<div class="t" style="left:1035px;top:869.03px;font-size:14.67px;color:#000;">0.373</div>
<div class="t" style="left:1140px;top:869.03px;font-size:14.67px;color:#000;">0.214</div>
<div class="t" style="left:1245px;top:869.03px;font-size:14.67px;color:#000;">1.74</div>
<div class="t" style="left:1330px;top:869.03px;font-size:14.67px;color:#000;">0.15</div>
<div class="t" style="left:1415px;top:869.03px;font-size:14.67px;color:#000;">RNA</div>
<div class="t" style="left:1533px;top:869.03px;font-size:14.67px;color:#000;">40.00</div>
<div style="position:absolute;left:466px;top:885px;width:1138px;height:21px;background:#fff;"></div>
<div class="t" style="left:469px;top:890.03px;font-size:14.67px;color:#000;">26</div>
<div class="t" style="left:510px;top:890.03px;font-size:14.67px;color:#000;">A07</div>
<div class="t" style="left:632px;top:890.03px;font-size:14.67px;color:#000;">TP-SSV</div>
<div class="t" style="left:737px;top:890.03px;font-size:14.67px;color:#000;">01.10.2024 10:23</div>
<div class="t" style="left:866px;top:890.03px;font-size:14.67px;color:#000;">15.1</div>
<div class="t" style="left:977px;top:890.03px;font-size:14.67px;color:#000;">ng/µl</div>
<div class="t" style="left:1035px;top:890.03px;font-size:14.67px;color:#000;">0.376</div>
<div class="t" style="left:1140px;top:890.03px;font-size:14.67px;color:#000;">0.208</div>
<div class="t" style="left:1245px;top:890.03px;font-size:14.67px;color:#000;">1.81</div>
<div class="t" style="left:1330px;top:890.03px;font-size:14.67px;color:#000;">0.15</div>
<div class="t" style="left:1415px;top:890.03px;font-size:14.67px;color:#000;">RNA</div>
<div class="t" style="left:1533px;top:890.03px;font-size:14.67px;color:#000;">40.00</div>
<div style="position:absolute;left:466px;top:906px;width:1138px;height:21px;background:#fff;"></div>
<div class="t" style="left:469px;top:911.03px;font-size:14.67px;color:#000;">27</div>
<div class="t" style="left:510px;top:911.03px;font-size:14.67px;color:#000;">A07</div>
<div class="t" style="left:632px;top:911.03px;font-size:14.67px;color:#000;">TP-SSV</div>
<div class="t" style="left:737px;top:911.03px;font-size:14.67px;color:#000;">01.10.2024 10:27</div>
<div class="t" style="left:866px;top:911.03px;font-size:14.67px;color:#000;">515.7</div>
<div class="t" style="left:977px;top:911.03px;font-size:14.67px;color:#000;">ng/µl</div>
<div class="t" style="left:1035px;top:911.03px;font-size:14.67px;color:#000;">12.894</div>
<div class="t" style="left:1140px;top:911.03px;font-size:14.67px;color:#000;">6.069</div>
<div class="t" style="left:1245px;top:911.03px;font-size:14.67px;color:#000;">2.12</div>
<div class="t" style="left:1330px;top:911.03px;font-size:14.67px;color:#000;">2.10</div>
<div class="t" style="left:1415px;top:911.03px;font-size:14.67px;color:#000;">RNA</div>
<div class="t" style="left:1533px;top:911.03px;font-size:14.67px;color:#000;">40.00</div>
<div style="position:absolute;left:466px;top:927px;width:1138px;height:21px;background:#fff;"></div>
<div class="t" style="left:469px;top:932.03px;font-size:14.67px;color:#000;">28</div>
<div class="t" style="left:510px;top:932.03px;font-size:14.67px;color:#000;">A10 13 14</div>
<div class="t" style="left:632px;top:932.03px;font-size:14.67px;color:#000;">TP-SSV</div>
<div class="t" style="left:737px;top:932.03px;font-size:14.67px;color:#000;">01.10.2024 11:01</div>
<div class="t" style="left:866px;top:932.03px;font-size:14.67px;color:#000;">0.2</div>
<div class="t" style="left:977px;top:932.03px;font-size:14.67px;color:#000;">ng/µl</div>
<div class="t" style="left:1035px;top:932.03px;font-size:14.67px;color:#000;">0.006</div>
<div class="t" style="left:1140px;top:932.03px;font-size:14.67px;color:#000;">-0.006</div>
<div class="t" style="left:1245px;top:932.03px;font-size:14.67px;color:#000;">-1.06</div>
<div class="t" style="left:1330px;top:932.03px;font-size:14.67px;color:#000;">0.69</div>
<div class="t" style="left:1415px;top:932.03px;font-size:14.67px;color:#000;">RNA</div>
<div class="t" style="left:1533px;top:932.03px;font-size:14.67px;color:#000;">40.00</div>
<div style="position:absolute;left:466px;top:948px;width:1138px;height:21px;background:#fff;"></div>
<div class="t" style="left:469px;top:953.03px;font-size:14.67px;color:#000;">29</div>
<div class="t" style="left:510px;top:953.03px;font-size:14.67px;color:#000;">A10 13 14 control</div>
<div class="t" style="left:632px;top:953.03px;font-size:14.67px;color:#000;">TP-SSV</div>
<div class="t" style="left:737px;top:953.03px;font-size:14.67px;color:#000;">01.10.2024 11:03</div>
<div class="t" style="left:866px;top:953.03px;font-size:14.67px;color:#000;">530.0</div>
<div class="t" style="left:977px;top:953.03px;font-size:14.67px;color:#000;">ng/µl</div>
<div class="t" style="left:1035px;top:953.03px;font-size:14.67px;color:#000;">13.249</div>
<div class="t" style="left:1140px;top:953.03px;font-size:14.67px;color:#000;">6.213</div>
<div class="t" style="left:1245px;top:953.03px;font-size:14.67px;color:#000;">2.13</div>
<div class="t" style="left:1330px;top:953.03px;font-size:14.67px;color:#000;">2.25</div>
<div class="t" style="left:1415px;top:953.03px;font-size:14.67px;color:#000;">RNA</div>
<div class="t" style="left:1533px;top:953.03px;font-size:14.67px;color:#000;">40.00</div>
<div style="position:absolute;left:466px;top:969px;width:1138px;height:21px;background:#0078D7;"></div>
<div class="t" style="left:469px;top:974.03px;font-size:14.67px;color:#fff;">30</div>
<div class="t" style="left:510px;top:974.03px;font-size:14.67px;color:#fff;">A14</div>
<div class="t" style="left:632px;top:974.03px;font-size:14.67px;color:#fff;">TP-SSV</div>
<div class="t" style="left:737px;top:974.03px;font-size:14.67px;color:#fff;">01.10.2024 11:05</div>
<div class="t" style="left:866px;top:974.03px;font-size:14.67px;color:#fff;">261.0</div>
<div class="t" style="left:977px;top:974.03px;font-size:14.67px;color:#fff;">ng/µl</div>
<div class="t" style="left:1035px;top:974.03px;font-size:14.67px;color:#fff;">6.526</div>
<div class="t" style="left:1140px;top:974.03px;font-size:14.67px;color:#fff;">3.100</div>
<div class="t" style="left:1245px;top:974.03px;font-size:14.67px;color:#fff;">2.10</div>
<div class="t" style="left:1330px;top:974.03px;font-size:14.67px;color:#fff;">2.09</div>
<div class="t" style="left:1415px;top:974.03px;font-size:14.67px;color:#fff;">RNA</div>
<div class="t" style="left:1533px;top:974.03px;font-size:14.67px;color:#fff;">40.00</div>
<div style="position:absolute;left:466px;top:801px;width:1138px;height:1px;background:#A0A0A0;"></div>
<div style="position:absolute;left:466px;top:822px;width:1138px;height:1px;background:#A0A0A0;"></div>
<div style="position:absolute;left:466px;top:843px;width:1138px;height:1px;background:#A0A0A0;"></div>
<div style="position:absolute;left:466px;top:864px;width:1138px;height:1px;background:#A0A0A0;"></div>
<div style="position:absolute;left:466px;top:885px;width:1138px;height:1px;background:#A0A0A0;"></div>
<div style="position:absolute;left:466px;top:906px;width:1138px;height:1px;background:#A0A0A0;"></div>
<div style="position:absolute;left:466px;top:927px;width:1138px;height:1px;background:#A0A0A0;"></div>
<div style="position:absolute;left:466px;top:948px;width:1138px;height:1px;background:#A0A0A0;"></div>
<div style="position:absolute;left:466px;top:969px;width:1138px;height:1px;background:#A0A0A0;"></div>
<div style="position:absolute;left:466px;top:990px;width:1138px;height:1px;background:#A0A0A0;"></div>
<div style="position:absolute;left:506px;top:801px;width:1px;height:189px;background:#A0A0A0;"></div>
<div style="position:absolute;left:628px;top:801px;width:1px;height:189px;background:#A0A0A0;"></div>
<div style="position:absolute;left:733px;top:801px;width:1px;height:189px;background:#A0A0A0;"></div>
<div style="position:absolute;left:862px;top:801px;width:1px;height:189px;background:#A0A0A0;"></div>
<div style="position:absolute;left:973px;top:801px;width:1px;height:189px;background:#A0A0A0;"></div>
<div style="position:absolute;left:1031px;top:801px;width:1px;height:189px;background:#A0A0A0;"></div>
<div style="position:absolute;left:1136px;top:801px;width:1px;height:189px;background:#A0A0A0;"></div>
<div style="position:absolute;left:1241px;top:801px;width:1px;height:189px;background:#A0A0A0;"></div>
<div style="position:absolute;left:1326px;top:801px;width:1px;height:189px;background:#A0A0A0;"></div>
<div style="position:absolute;left:1411px;top:801px;width:1px;height:189px;background:#A0A0A0;"></div>
<div style="position:absolute;left:1529px;top:801px;width:1px;height:189px;background:#A0A0A0;"></div>
<div style="position:absolute;left:1604px;top:801px;width:1px;height:189px;background:#A0A0A0;"></div>
<div style="position:absolute;left:1604px;top:778px;width:1px;height:23px;background:#E5E5E5;"></div>
<div style="position:absolute;left:1899px;top:778px;width:16px;height:223px;background:#F0F0F0;border-left:1px solid #fafafa;box-sizing:border-box;"></div>
<div style="position:absolute;left:1907px;top:925px;width:2px;height:61px;background:#8a8a8a;border-radius:1px;"></div>
<div style="position:absolute;left:0px;top:1009px;width:1920px;height:23px;background:#F0F0F0;border-top:1px solid #d8d8d8;box-sizing:border-box;"></div>
<svg style="position:absolute;left:52px;top:1013px" width="16" height="16" viewBox="0 0 16 16">
<path d="M8 0.5 L15 3 L15 8 Q15 13 8 15.5 Q1 13 1 8 L1 3 Z" fill="#6c9a78" stroke="#505a55" stroke-width="0.8"/>
<path d="M8 1.5 L14 3.6 L14 8 Q14 12.3 8 14.5 Z" fill="#4c8a5c"/>
<path d="M4.5 8 L7 10.5 L11.5 5.5" fill="none" stroke="#fff" stroke-width="1.6"/>
</svg>
<div class="t" style="left:1865.5px;top:1016.97px;font-size:11.2px;color:#000;">TP-SSV</div>
<div style="position:absolute;left:0px;top:1032px;width:1920px;height:48px;background:linear-gradient(to right,#E6EEF9 0%,#E2EAF8 35%,#DCE4F7 55%,#E2E9F7 75%,#E5ECF7 100%);border-top:1px solid #cfd6e0;box-sizing:border-box;"></div>
<svg style="position:absolute;left:16px;top:1036px" width="32" height="34" viewBox="0 0 32 34">
<defs><linearGradient id="gcl" x1="0" y1="0" x2="0" y2="1"><stop offset="0" stop-color="#e4eefa"/><stop offset="1" stop-color="#c4d2ee"/></linearGradient>
<linearGradient id="gdrop" x1="0" y1="0" x2="0" y2="1"><stop offset="0" stop-color="#4a90ea"/><stop offset="1" stop-color="#0f62e0"/></linearGradient></defs>
<path d="M6 24 Q3 24 3.2 20 Q3.5 16.5 7.5 16.5 Q9 10.2 14 10.2 Q19 10.5 20.5 15 L24 15.5 Q26.8 17 26.8 20.5 Q26.5 24 23.5 24 Z" fill="url(#gcl)" stroke="#a8b8d8" stroke-width="0.6"/>
<path d="M9.3 20.9 L14.7 27.4 Q14.7 29.6 11.9 29.6 Q9.3 29.6 9.3 27 Z" fill="url(#gdrop)"/>
<path d="M18.3 20.3 L24.9 27.4 Q24.9 30.5 21.5 30.5 Q18.3 30.5 18.3 27.5 Z" fill="url(#gdrop)"/>
<circle cx="21.9" cy="9" r="7.9" fill="#c42b1c"/>
<path d="M20.6 7.6 L23.6 5.9 L23.6 13.9" fill="none" stroke="#fff" stroke-width="1.5" stroke-linejoin="round"/>
</svg>
<div class="t" style="left:50px;top:1042.88px;font-size:11.3px;color:#1a1a1a;">14°C</div>
<div class="t" style="left:50px;top:1058.88px;font-size:11.3px;color:#555;">Rain</div>
<svg style="position:absolute;left:705px;top:1045px" width="23" height="23" viewBox="0 0 23 23">
<defs><linearGradient id="gwin" x1="0" y1="0" x2="1" y2="1"><stop offset="0" stop-color="#4cc2ff"/><stop offset="1" stop-color="#0078d4"/></linearGradient></defs>
<rect x="0" y="0" width="11" height="11" fill="url(#gwin)"/><rect x="12" y="0" width="11" height="11" fill="url(#gwin)"/>
<rect x="0" y="12" width="11" height="11" fill="url(#gwin)"/><rect x="12" y="12" width="11" height="11" fill="url(#gwin)"/>
</svg>
<div style="position:absolute;left:742px;top:1040px;width:218px;height:32px;box-sizing:border-box;border:1px solid #d4dae4;border-radius:16px;background:#F6F9FD;"></div>
<svg style="position:absolute;left:751px;top:1047px" width="18" height="18" viewBox="0 0 18 18">
<circle cx="7.5" cy="7.5" r="5.5" fill="none" stroke="#1a1a1a" stroke-width="1.6"/>
<path d="M11.5 11.5 L16 16" stroke="#1a1a1a" stroke-width="1.8"/></svg>
<div class="t" style="left:778px;top:1050.44px;font-size:13px;color:#5a5a5a;">Search</div>
<svg style="position:absolute;left:914px;top:1042px" width="44" height="28" viewBox="0 0 44 28">
<rect x="1" y="8" width="4" height="19" fill="#c9552a"/><rect x="5" y="6" width="4" height="21" fill="#3f8a3a"/>
<rect x="9" y="9" width="4" height="18" fill="#d9a53a"/><rect x="13" y="7" width="4" height="20" fill="#4a7a3a"/>
<rect x="17" y="10" width="4" height="17" fill="#c9552a"/><rect x="21" y="8" width="4" height="19" fill="#3f8a3a"/>
<path d="M17 3 L44 12" stroke="#555" stroke-width="0.6"/>
<path d="M17.5 1.5 L23.5 6 L17 9 Z" fill="#2e3440"/><path d="M22.5 6 L29 8.5 L23.5 13 Z" fill="#2f9a2a"/>
<path d="M29.5 9 L35.5 10.5 L31 17 Z" fill="#e86a1a"/><path d="M36 11 L43 12 L38.5 18.5 Z" fill="#f0c030"/>
</svg>
<svg style="position:absolute;left:972px;top:1044px" width="26" height="23" viewBox="0 0 26 23">
<rect x="8" y="1" width="17" height="15" rx="2" fill="#f4f4f4" stroke="#d0d0d0" stroke-width="0.8"/>
<rect x="1" y="7" width="17" height="15" rx="2" fill="#1e1e1e"/>
<rect x="8" y="7" width="10" height="9" fill="#bfbfbf"/>
</svg>
<svg style="position:absolute;left:1060px;top:1043px" width="26" height="26" viewBox="0 0 26 26">
<defs><linearGradient id="gecap" x1="0" y1="0" x2="1" y2="0.3"><stop offset="0" stop-color="#38c0f4"/><stop offset="0.5" stop-color="#2ac4c8"/><stop offset="1" stop-color="#6ade5a"/></linearGradient>
<linearGradient id="gewave" x1="0" y1="0" x2="0.6" y2="1"><stop offset="0" stop-color="#1a86e6"/><stop offset="1" stop-color="#0c4a9c"/></linearGradient></defs>
<path d="M1.4 11.4 Q3 1.9 13.5 2 Q24 2.2 25 12 Q25 15.5 22 16.3 Q18 17 16.6 14.5 Q16 11.5 13 10.5 Q8 9.5 3 13 Z" fill="url(#gecap)"/>
<path d="M1.4 11.4 Q4 8.5 9 9 Q13.5 9.8 15.5 13 Q13 13 12.6 15.5 Q13 19.5 17 20.5 Q21 21 23.5 19.3 Q21 24.5 14 25 Q5 25 2 17 Q1 14 1.4 11.4 Z" fill="url(#gewave)"/>
<path d="M12.4 14.5 Q13 12 15.5 12.6 Q17 13.8 16.8 15.5 Q18 17.8 23.5 19.3 Q19 22 15 20.2 Q12 18.5 12.4 14.5 Z" fill="#DDE5F6"/>
</svg>
<div style="position:absolute;left:1098px;top:1037px;width:38px;height:38px;background:#EEF1FA;border-radius:5px;box-sizing:border-box;border:1px solid #e2e6f0;"></div>
<svg style="position:absolute;left:1105px;top:1044px" width="24" height="24" viewBox="0 0 24 24">
<defs><linearGradient id="gapp" x1="0" y1="0" x2="1" y2="1"><stop offset="0" stop-color="#4f5c9c"/><stop offset="0.5" stop-color="#aab8e2"/><stop offset="1" stop-color="#5a68a8"/></linearGradient></defs>
<rect x="0" y="0" width="24" height="24" fill="url(#gapp)"/>
<path d="M2 1 H22 Q23.5 3 22 6 Q17 6.5 15.5 8 L8.5 8 Q7 6.5 2 6 Q0.5 3 2 1 Z" fill="#050505"/>
<path d="M2 23 H22 Q23.5 21 22 17.5 Q17 17 15.5 15.5 L8.5 15.5 Q7 17 2 17.5 Q0.5 21 2 23 Z" fill="#050505"/>
<path d="M6 8 H18 L15.5 11.7 L18 15.5 H6 L8.5 11.7 Z" fill="#3b4a98"/>
<rect x="10" y="10.8" width="4" height="1.8" rx="0.9" fill="#b8c4f0"/>
</svg>
<div style="position:absolute;left:1109px;top:1072px;width:16px;height:3px;background:#0067C0;border-radius:2px;"></div>
<svg style="position:absolute;left:1149px;top:1043px" width="25" height="26" viewBox="0 0 25 26">
<defs><linearGradient id="gpal" x1="0" y1="0" x2="1" y2="1"><stop offset="0" stop-color="#38b8f0"/><stop offset="1" stop-color="#1a78d0"/></linearGradient></defs>
<path d="M12 1 Q23 1 23.5 10 Q24 15 19 15 Q16 15 16.5 19 Q17 24 11 24 Q1 23.5 1 13 Q1 1 12 1 Z" fill="url(#gpal)"/>
<circle cx="5.5" cy="13" r="2" fill="#d8542a"/><circle cx="8" cy="7.5" r="2" fill="#2a9a3a"/><circle cx="13" cy="4.5" r="2" fill="#f0c430"/>
<path d="M13 13.5 h3 M14.5 12 v3" stroke="#e8f4ff" stroke-width="1"/>
<rect x="16" y="9" width="2.5" height="16" fill="#8a5a2a"/><rect x="15.5" y="7" width="3.5" height="3" fill="#e8d8b0"/>
</svg>
<div style="position:absolute;left:1158px;top:1072px;width:6px;height:3px;background:#7a7a88;border-radius:2px;"></div>
<svg style="position:absolute;left:1192px;top:1045px" width="26" height="22" viewBox="0 0 26 22">
<path d="M0.5 2 Q0.5 0.5 2 0.5 L8 0.5 L10 2.5 L25 2.5 L25 21.5 L0.5 21.5 Z" fill="#e2a418"/>
<path d="M0.5 5 L25 5 L25 21.5 L0.5 21.5 Z" fill="#ffd24e"/>
<path d="M5 21.5 L5 16 Q5 14.5 6.5 14.5 L19 14.5 Q20.5 14.5 20.5 16 L20.5 21.5 Z" fill="#1a78d0"/>
</svg>
<div style="position:absolute;left:1202px;top:1072px;width:6px;height:3px;background:#7a7a88;border-radius:2px;"></div>
<svg style="position:absolute;left:1689px;top:1052px" width="12" height="8" viewBox="0 0 12 8"><path d="M1 7 L6 2 L11 7" fill="none" stroke="#1a1a1a" stroke-width="1.3"/></svg>
<div class="t" style="left:1722.5px;top:1052.88px;font-size:11.3px;color:#1a1a1a;">FRA</div>
<svg style="position:absolute;left:1762px;top:1047px" width="18" height="18" viewBox="0 0 18 18">
<rect x="1" y="3" width="11" height="9" fill="none" stroke="#1a1a1a" stroke-width="1.1"/>
<path d="M4 15 H10 M7 12 V15" stroke="#1a1a1a" stroke-width="1.1"/>
<rect x="13" y="1" width="3" height="4" rx="1" fill="none" stroke="#1a1a1a" stroke-width="1"/>
<path d="M14.5 5 V16" stroke="#1a1a1a" stroke-width="1.1"/>
</svg>
<svg style="position:absolute;left:1786px;top:1048px" width="18" height="16" viewBox="0 0 18 16">
<path d="M1 5.5 H4 L8 2 V14 L4 10.5 H1 Z" fill="none" stroke="#1a1a1a" stroke-width="1.1"/>
<path d="M10.5 6 Q12 8 10.5 10 M12.5 4 Q15 8 12.5 12 M14.5 2 Q18 8 14.5 14" fill="none" stroke="#1a1a1a" stroke-width="1.1"/>
</svg>
<div class="t" style="right:43px;top:1042.71px;font-size:11.5px;color:#1a1a1a;">11:05</div>
<div class="t" style="right:43px;top:1058.71px;font-size:11.5px;color:#1a1a1a;">01.10.2024</div>
<svg style="position:absolute;left:1885px;top:1048px" width="15" height="17" viewBox="0 0 15 17">
<path d="M7.5 1 Q12.5 1 12.5 7 L12.5 11 L14.5 13 L0.5 13 L2.5 11 L2.5 7 Q2.5 1 7.5 1 Z" fill="#003e92"/>
<path d="M5.5 14 Q7.5 16.5 9.5 14 Z" fill="#003e92"/>
</svg>
</body></html>
